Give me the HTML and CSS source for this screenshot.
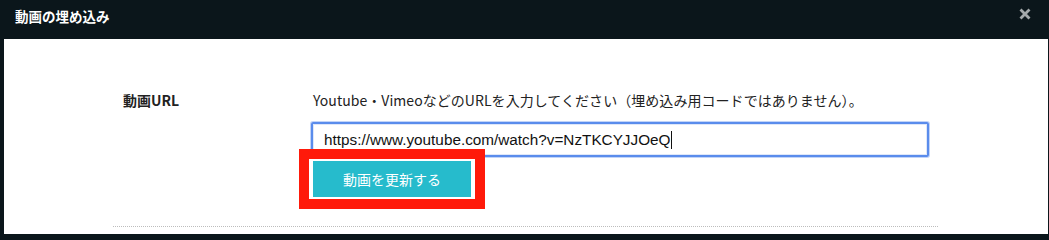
FILE: index.html
```html
<!DOCTYPE html>
<html lang="ja">
<head>
<meta charset="utf-8">
<title>動画の埋め込み</title>
<link rel="stylesheet" href="styles.css">
</head>
<body>
<div class="modal">
  <div class="modal-header">
    <h1 class="modal-title">動画の埋め込み</h1>
    <button class="close-btn" aria-label="閉じる">
      <svg width="12" height="12" viewBox="0 0 12 12"><path d="M1.5 1.5 L10.5 10.5 M10.5 1.5 L1.5 10.5" stroke="#a3a8aa" stroke-width="2.8" stroke-linecap="butt"/></svg>
    </button>
  </div>
  <div class="modal-body">
    <div class="form-row">
      <div class="form-label">動画URL</div>
      <div class="form-field">
        <p class="help">Youtube・VimeoなどのURLを入力してください（埋め込み用コードではありません）。</p>
        <div class="url-input">https://www.youtube.com/watch?v=NzTKCYJJOeQ<span class="caret"></span></div>
        <div class="btn-wrap">
          <button class="update-btn">動画を更新する</button>
          <span class="highlight"></span>
        </div>
      </div>
    </div>
  </div>
</div>
</body>
</html>
```
FILE: styles.css
```css
html, body {
  margin: 0;
  padding: 0;
  background: #0b161b;
  height: 100%;
  overflow: hidden;
}
body {
  font-family: "Noto Sans CJK JP", "Noto Sans", sans-serif;
}
.modal {
  display: flex;
  flex-direction: column;
  height: 234px;
}
.modal-header {
  height: 39px;
  display: flex;
  align-items: center;
  justify-content: space-between;
  padding: 0 16px 0 15px;
  box-sizing: border-box;
  background: #0b161b;
}
.modal-title {
  margin: 0;
  font-size: 13.5px;
  font-weight: 700;
  color: #ffffff;
  line-height: 1;
  position: relative;
  top: -3px;
}
.close-btn {
  background: none;
  border: 0;
  padding: 0;
  margin: 0;
  width: 12px;
  height: 12px;
  display: flex;
  position: relative;
  top: -6px;
  right: 2px;
}
.modal-body {
  flex: 1;
  background: #ffffff;
  margin: 0 1px 0 4px;
  padding: 0 0 0 109px;
}
.form-row {
  width: 825px;
  display: flex;
  padding: 51px 0 29px;
  border-bottom: 1px dotted #bdbdbd;
  box-sizing: border-box;
}
.form-label {
  width: 198px;
  flex: none;
  padding-left: 10px;
  box-sizing: border-box;
  font-size: 14px;
  font-weight: 700;
  color: #222;
  line-height: 20px;
}
.form-field {
  width: 618px;
}
.help {
  margin: 0 0 0 2px;
  font-size: 14px;
  line-height: 20px;
  color: #222;
  white-space: nowrap;
  letter-spacing: 0.05px;
}
.url-input {
  margin-top: 12px;
  height: 35px;
  box-sizing: border-box;
  border: 2px solid #5a8cec;
  box-shadow: 0 0 0 1px rgba(120, 160, 240, 0.45), inset 0 0 0 1px rgba(200, 215, 245, 0.6);
  border-radius: 2px;
  padding: 0 0 0 11px;
  display: flex;
  align-items: center;
  font-family: "Liberation Sans", Arial, sans-serif;
  font-size: 15.3px;
  color: #111;
}
.caret {
  display: inline-block;
  width: 1px;
  height: 18px;
  background: #111;
  margin-left: 1px;
}
.btn-wrap {
  position: relative;
  margin-top: 4px;
  margin-left: 2px;
  width: 158px;
  height: 36px;
}
.update-btn {
  width: 158px;
  height: 36px;
  border: 0;
  background: #26bbcc;
  color: #ffffff;
  font-family: "Noto Sans CJK JP", sans-serif;
  font-size: 14px;
  padding: 0;
  display: block;
}
.highlight {
  position: absolute;
  left: -14px;
  right: -14px;
  top: -12px;
  bottom: -12px;
  border: 10px solid #ff1a0a;
  pointer-events: none;
}
```
